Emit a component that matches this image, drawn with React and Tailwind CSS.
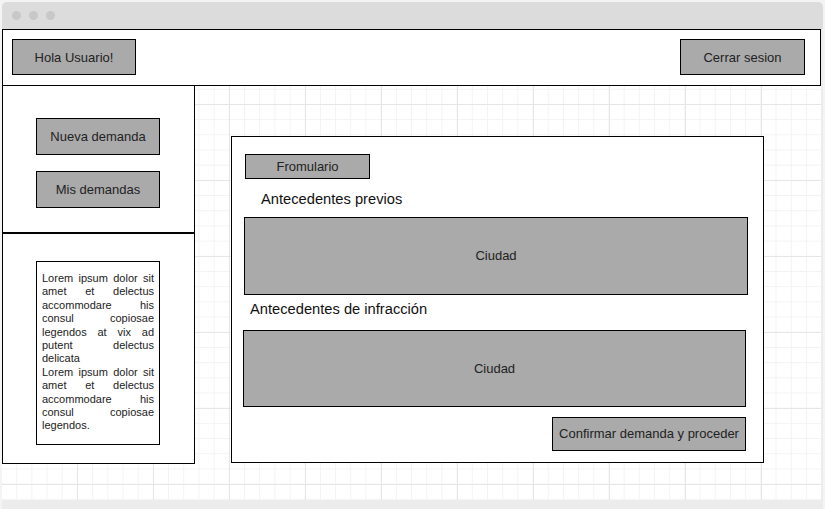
export default function App() {
  const btn =
    "flex items-center justify-center bg-[#aaaaaa] border border-black text-[13px] text-[#222]";
  const font = { fontFamily: '"Liberation Sans", Arial, sans-serif' };
  return (
    <div className="w-[825px] h-[509px] bg-[#f4f4f4] pt-[2px] pl-[2px] overflow-hidden" style={font}>
      <div className="w-[821px] h-[507px] rounded-t-[5px] bg-[#ececec] overflow-hidden flex flex-col">
        <div className="h-[27px] bg-[#dcdcdc] flex items-center gap-[8px] pl-[10px] shrink-0">
          <div className="w-[9px] h-[9px] rounded-full bg-[#c8c8c8]" />
          <div className="w-[9px] h-[9px] rounded-full bg-[#c8c8c8]" />
          <div className="w-[9px] h-[9px] rounded-full bg-[#c8c8c8]" />
        </div>
        <div className="w-[819px] h-[471px] bg-white flex flex-col bg-[linear-gradient(to_right,#e6e6e6_1px,transparent_1px),linear-gradient(to_bottom,#e6e6e6_1px,transparent_1px),linear-gradient(to_right,#f3f3f3_1px,transparent_1px),linear-gradient(to_bottom,#f3f3f3_1px,transparent_1px)] [background-size:76px_76px,76px_76px,15.2px_15.2px,15.2px_15.2px] [background-position:-1px_-1px]">
          <div className="h-[57px] shrink-0 border border-black bg-white flex items-start justify-between pt-[9px] pl-[9px] pr-[15px]">
            <div className={btn + " w-[124px] h-[36px] pt-[2px]"}>Hola Usuario!</div>
            <div className={btn + " w-[125px] h-[36px] pt-[2px]"}>Cerrar sesion</div>
          </div>
          <div className="flex flex-1">
            <div className="w-[193px] flex flex-col">
              <div className="h-[147px] border-x border-b border-black bg-white flex flex-col pt-[32px] pl-[33px] gap-[16px]">
                <div className={btn + " w-[124px] h-[37px]"}>Nueva demanda</div>
                <div className={btn + " w-[124px] h-[37px]"}>Mis demandas</div>
              </div>
              <div className="h-[231px] border border-black bg-white pt-[27px] pl-[33px]">
                <div className="w-[124px] h-[184px] border border-black bg-white pl-[5px] pr-[5px] pt-[10px] text-[11px] leading-[13.4px] text-[#222] text-justify">
                  <p>
                    Lorem ipsum dolor sit amet et delectus accommodare his consul copiosae legendos at vix ad putent delectus delicata
                  </p>
                  <p>
                    Lorem ipsum dolor sit amet et delectus accommodare his consul copiosae legendos.
                  </p>
                </div>
              </div>
            </div>
            <div className="flex-1 pl-[36px] pt-[50px]">
              <div className="w-[533px] h-[327px] border border-black bg-white flex flex-col">
                <div className={btn + " mt-[17px] ml-[13px] w-[125px] h-[25px]"}>Fromulario</div>
                <div className="mt-[11px] ml-[29px] text-[14.7px] leading-[18px] text-[#111]">Antecedentes previos</div>
                <div className={btn + " mt-[9px] ml-[12px] w-[504px] h-[78px]"}>Ciudad</div>
                <div className="mt-[5px] ml-[18px] text-[14.7px] leading-[18px] text-[#111]">Antecedentes de infracción</div>
                <div className={btn + " mt-[12px] ml-[11px] w-[503px] h-[77px]"}>Ciudad</div>
                <div className={btn + " mt-[10px] ml-[320px] w-[194px] h-[34px]"}>Confirmar demanda y proceder</div>
              </div>
            </div>
          </div>
        </div>
      </div>
    </div>
  );
}
